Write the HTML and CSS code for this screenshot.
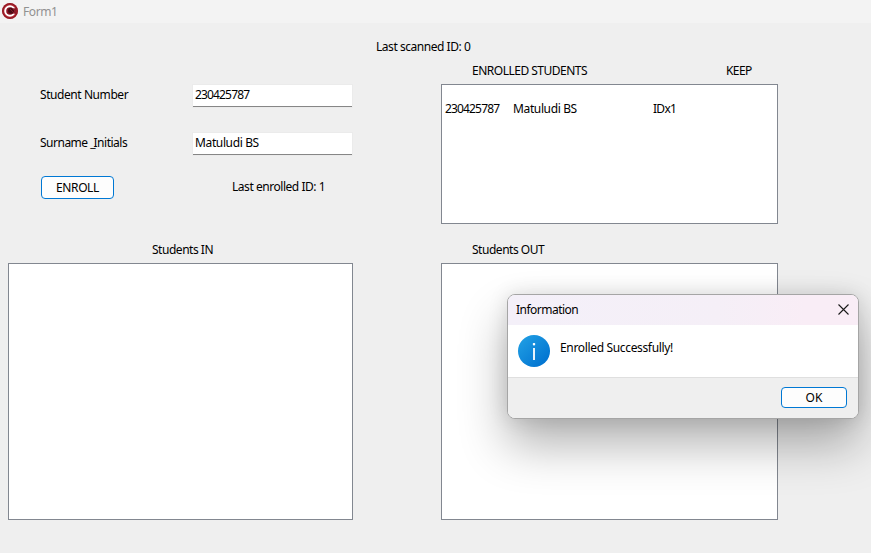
FILE: index.html
```html
<!DOCTYPE html>
<html lang="en">
<head>
<meta charset="utf-8">
<title>Form1</title>
<link rel="stylesheet" href="styles.css">
</head>
<body>
<header class="titlebar">
  <svg class="app-icon" width="16" height="16" viewBox="0 0 16 16">
    <circle cx="8" cy="8" r="8" fill="#b0222e"/>
    <circle cx="8" cy="8" r="7.3" fill="none" stroke="#8a1a24" stroke-width="1"/>
    <circle cx="8" cy="8" r="4.8" fill="#8c1726" stroke="#fff" stroke-width="2"/>
    <path d="M10.500 5.500l4-.5v6l-4-.5z" fill="#8c1726"/>
    <circle cx="9" cy="7.800" r="3" fill="#4b0b14"/>
    <path d="M8 6l4 4M10 5l4 4" stroke="#8f1e2d" stroke-width=".8"/>
  </svg>
  <span class="t-form">Form1</span>
</header>
<main class="form">
  <div class="scan-status"><span class="t-scan">Last scanned ID: 0</span></div>
  <div class="columns">
    <section class="left">
      <div class="entry">
        <label class="field"><span class="field-label t-number">Student Number</span><span class="input"><span class="t-id">230425787</span></span></label>
        <label class="field"><span class="field-label t-surname">Surname <span class="underscore">_</span>Initials</span><span class="input"><span class="t-name">Matuludi BS</span></span></label>
        <div class="actions"><button class="button enroll"><span class="t-enroll">ENROLL</span></button><span class="t-last">Last enrolled ID: 1</span></div>
      </div>
      <h2 class="heading heading-in"><span class="t-in">Students IN</span></h2>
      <div class="list list-large"></div>
    </section>
    <section class="right">
      <div class="heading heading-enrolled"><span class="t-enrolled">ENROLLED STUDENTS</span><span class="t-keep">KEEP</span></div>
      <div class="list list-small">
        <div class="row"><span class="cell-id"><span class="t-id">230425787</span></span><span class="cell-name"><span class="t-name">Matuludi BS</span></span><span class="t-idx">IDx1</span></div>
      </div>
      <h2 class="heading heading-out"><span class="t-out">Students OUT</span></h2>
      <div class="list list-large"></div>
    </section>
  </div>
</main>
<div class="dialog" role="dialog">
  <div class="dialog-title"><span class="t-info">Information</span>
    <svg width="11" height="11" viewBox="0 0 11 11"><path d="M.5.5l10 10M10.500.5l-10 10" stroke="#1a1a1a" stroke-width="1.1" fill="none"/></svg>
  </div>
  <div class="dialog-body">
    <svg width="32" height="32" viewBox="0 0 32 32">
      <defs><linearGradient id="blue" x1="0" y1="0" x2="1" y2="1"><stop offset=".1" stop-color="#1f9de3"/><stop offset=".9" stop-color="#0072d0"/></linearGradient></defs>
      <circle cx="16" cy="16" r="16" fill="url(#blue)"/>
      <rect x="14.800" y="8" width="2.400" height="2.400" rx=".8" fill="#fff"/>
      <rect x="15.100" y="13" width="1.800" height="12" fill="#fff"/>
    </svg>
    <span class="t-success">Enrolled Successfully!</span>
  </div>
  <div class="dialog-footer"><button class="button ok"><span class="t-ok">OK</span></button></div>
</div>
</body>
</html>
```
FILE: styles.css
```css
* { box-sizing: border-box; }
body {
  margin: 0;
  width: 871px;
  height: 553px;
  overflow: hidden;
  position: relative;
  background: #efefef;
  color: #000;
  font: 12px/20px "Noto Sans", "Open Sans", sans-serif;
  white-space: nowrap;
}
svg { display: block; flex: none; }
.titlebar {
  height: 23px;
  padding: 0 0 1px 2px;
  display: flex;
  align-items: center;
  gap: 5px;
  background: #f3f3f3;
  color: #919191;
}
.titlebar span { padding-top: 1px; }
.form { padding: 14px 8px 0; }
.scan-status { padding-left: 368px; height: 24px; }
.columns { display: grid; grid-template-columns: 345px 337px; gap: 88px; }
.entry { height: 179px; padding: 24px 0 0 32px; }
.field { display: flex; height: 23px; margin-bottom: 25px; }
.field-label { width: 153px; flex: none; }
.underscore { letter-spacing: -2px; }
.input {
  width: 159px;
  height: 22px;
  padding-left: 2px;
  background: #fff;
  border-bottom: 1px solid #868686;
  box-shadow: 0 0 0 1px #ebebeb;
}
.actions { display: flex; align-items: center; height: 22px; margin-top: -5px; padding-left: 1px; }
.button {
  display: flex;
  align-items: center;
  justify-content: center;
  padding: 0;
  font: inherit;
  color: #000;
  background: #fdfdfd;
  border: 1px solid #0078d4;
  border-radius: 4px;
}
.enroll { width: 73px; height: 23px; margin-right: 118px; padding-top: 1px; }
.heading { margin: 0; height: 20px; font: inherit; display: flex; }
.heading-in { padding-left: 144px; }
.heading-enrolled { padding-left: 31px; }
.heading-enrolled .t-enrolled { width: 254px; }
.heading-out { padding-left: 31px; margin-top: 16px; }
.list { margin-top: 3px; background: #fff; border: 1px solid #828790; }
.list-small { height: 140px; padding: 14px 3px; }
.list-large { height: 257px; }
.row { display: flex; }
.cell-id { width: 68px; }
.cell-name { width: 140px; }
.dialog {
  position: absolute;
  left: 507px;
  top: 294px;
  width: 352px;
  height: 125px;
  border: 1px solid #a5a5a5;
  border-radius: 8px;
  overflow: hidden;
  background: #fff;
  box-shadow: 0 26px 48px rgba(0,0,0,.3), 0 0 20px rgba(0,0,0,.12);
}
.dialog-title {
  height: 30px;
  padding: 0 9px 0 8px;
  display: flex;
  align-items: center;
  justify-content: space-between;
  background: linear-gradient(90deg, #f4f0f9, #f5eff7 60%, #f9edf6 85%);
}
.dialog-title svg { margin-top: -2px; }
.dialog-body { height: 52px; padding: 10px; display: flex; gap: 10px; }
.dialog-body span { margin-top: 3px; height: 20px; }
.dialog-footer { height: 41px; padding: 9px 11px; display: flex; justify-content: flex-end; background: #efefef; border-top: 1px solid #dfdfdf; }
.ok { width: 66px; height: 21px; }

/* Tight tracking for the compact control captions */
.t-form { letter-spacing: -.4px; }
.t-scan, .t-last { letter-spacing: -.46px; }
.t-number { letter-spacing: -.43px; }
.t-surname { letter-spacing: -.5px; }
.t-id { letter-spacing: -.84px; }
.t-name { letter-spacing: -.37px; }
.t-idx { letter-spacing: -.7px; }
.t-enrolled { letter-spacing: -.5px; }
.t-keep { letter-spacing: -.6px; }
.t-in, .t-out { letter-spacing: -.47px; }
.t-info { letter-spacing: -.52px; }
.t-success { letter-spacing: -.34px; }
.t-enroll { letter-spacing: -.4px; }
```
